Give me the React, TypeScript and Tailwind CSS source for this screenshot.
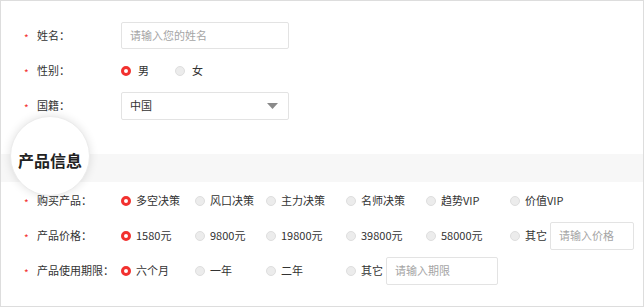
import React from 'react';

const font = { fontFamily: '"Noto Sans CJK SC", "Noto Sans", sans-serif' };

const Radio: React.FC<{ checked?: boolean }> = ({ checked }) =>
  checked ? (
    <span className="block w-[10px] h-[10px] rounded-full border-[3px] border-[#f2312f] bg-white shrink-0" />
  ) : (
    <span className="block w-[10px] h-[10px] rounded-full border border-[#dedede] bg-[#ececec] shrink-0" />
  );

const Option: React.FC<{ label: string; checked?: boolean; width: string }> = ({ label, checked, width }) => (
  <div className={`flex items-center gap-[5px] shrink-0 ${width}`}>
    <Radio checked={checked} />
    <span className="text-[11px] text-[#333] whitespace-nowrap">{label}</span>
  </div>
);

const Label: React.FC<{ text: string }> = ({ text }) => (
  <div className="w-[120px] shrink-0 flex items-center pl-[23px]">
    <span className="w-[13px] text-[10px] text-[#f2312f] leading-none translate-y-[2px]">*</span>
    <span className="text-[11px] text-[#333] whitespace-nowrap">{text}</span>
  </div>
);

const Row: React.FC<{ children: React.ReactNode }> = ({ children }) => (
  <div className="h-[35px] flex items-center">{children}</div>
);

// column widths for the option rows
const cols = ['w-[74px]', 'w-[71px]', 'w-[80px]', 'w-[80px]', 'w-[84px]', 'w-auto'];

const App: React.FC = () => {
  const products = ['多空决策', '风口决策', '主力决策', '名师决策', '趋势VIP', '价值VIP'];
  const prices = ['1580元', '9800元', '19800元', '39800元', '58000元'];
  const periods = ['六个月', '一年', '二年'];

  return (
    <div className="w-[644px] h-[308px] bg-white" style={font}>
      <div className="h-[307px] border border-[#dddddd] pt-[17px]">
        <Row>
          <Label text="姓名：" />
          <div className="w-[168px] h-[27px] border border-[#e3e3e3] rounded-[2px] flex items-center px-[8px] text-[11px] text-[#a5a5a5]">
            请输入您的姓名
          </div>
        </Row>
        <Row>
          <Label text="性别：" />
          <div className="flex items-center">
            <div className="w-[54px] flex items-center gap-[7px]">
              <Radio checked />
              <span className="text-[11px] text-[#333]">男</span>
            </div>
            <div className="flex items-center gap-[7px]">
              <Radio />
              <span className="text-[11px] text-[#333]">女</span>
            </div>
          </div>
        </Row>
        <Row>
          <Label text="国籍：" />
          <div className="w-[168px] h-[28px] border border-[#e3e3e3] rounded-[2px] flex items-center justify-between pl-[8px] pr-[10px] text-[11px] text-[#333]">
            <span>中国</span>
            <svg width="11" height="6" viewBox="0 0 11 6">
              <path d="M0 0 L11 0 L5.5 6 Z" fill="#8a8a8a" />
            </svg>
          </div>
        </Row>

        <div className="relative mt-[31px] h-[28px] bg-[#f7f7f7]">
          <div className="absolute left-[9px] top-[-38px] w-[80px] h-[80px] rounded-full bg-white border border-[#ececec] shadow-[0_0_10px_rgba(0,0,0,0.12)] flex items-center justify-center">
            <span className="text-[16px] font-bold text-[#222] mt-[7px]">产品信息</span>
          </div>
        </div>

        <div className="mt-[1px]">
          <Row>
            <Label text="购买产品：" />
            <div className="flex items-center">
              {products.map((p, i) => (
                <Option key={p} label={p} checked={i === 0} width={cols[i]} />
              ))}
            </div>
          </Row>
          <Row>
            <Label text="产品价格：" />
            <div className="flex items-center">
              {prices.map((p, i) => (
                <Option key={p} label={p} checked={i === 0} width={cols[i]} />
              ))}
              <Option label="其它" width="w-auto" />
              <div className="ml-[3px] w-[84px] h-[28px] border border-[#e3e3e3] rounded-[2px] flex items-center px-[8px] text-[11px] text-[#a5a5a5]">
                请输入价格
              </div>
            </div>
          </Row>
          <Row>
            <Label text="产品使用期限：" />
            <div className="flex items-center">
              {periods.map((p, i) => (
                <Option key={p} label={p} checked={i === 0} width={cols[i]} />
              ))}
              <Option label="其它" width="w-auto" />
              <div className="ml-[3px] w-[112px] h-[28px] border border-[#e3e3e3] rounded-[2px] flex items-center px-[8px] text-[11px] text-[#a5a5a5]">
                请输入期限
              </div>
            </div>
          </Row>
        </div>
      </div>
    </div>
  );
};

export default App;
